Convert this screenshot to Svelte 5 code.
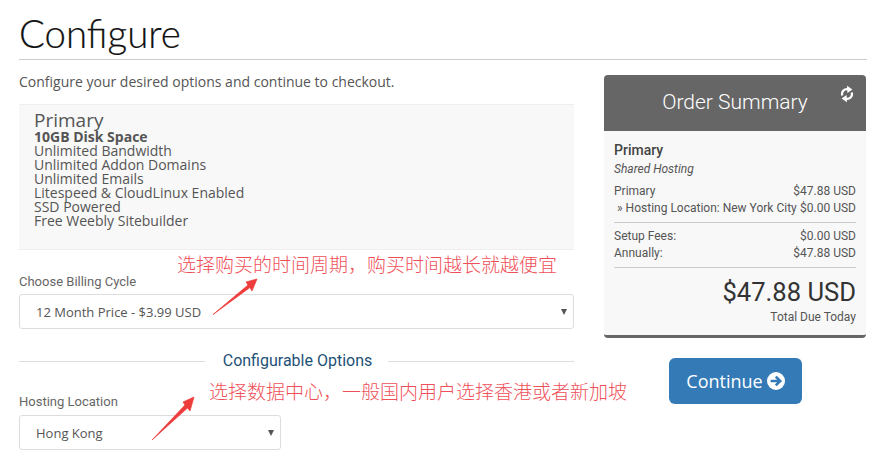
<script>
  const features = [
    "Unlimited Bandwidth",
    "Unlimited Addon Domains",
    "Unlimited Emails",
    "Litespeed & CloudLinux Enabled",
    "SSD Powered",
    "Free Weebly Sitebuilder"
  ]
</script>

<div class="page">
  <h1 class="title">Configure</h1>

  <div class="columns">
    <main class="main">
      <p class="intro">Configure your desired options and continue to checkout.</p>

      <div class="product">
        <div class="product-name">Primary</div>
        <div class="feature"><b>10GB Disk Space</b></div>
        {#each features as f}
          <div class="feature">{f}</div>
        {/each}
      </div>

      <div class="field billing">
        <span class="label">Choose Billing Cycle</span>
        <div class="select">12 Month Price - $3.99 USD<span class="caret"></span></div>
      </div>

      <div class="divider"><span>Configurable Options</span></div>

      <div class="field location">
        <span class="label">Hosting Location</span>
        <div class="select short">Hong Kong<span class="caret"></span></div>
      </div>
    </main>

    <aside class="side">
      <div class="summary">
        <div class="summary-head">
          Order Summary
          <svg class="refresh" viewBox="0 0 14 18" width="14" height="18" aria-hidden="true">
            <path d="M2.2 10.5 C1.2 6.4 4.4 3.4 8.2 4.2" fill="none" stroke="#fff" stroke-width="2.2"/>
            <path d="M7 0.8 L12.4 4.4 L7.4 8 Z" fill="#fff"/>
            <path d="M11.8 7.5 C12.8 11.6 9.6 14.6 5.8 13.8" fill="none" stroke="#fff" stroke-width="2.2"/>
            <path d="M7 17.2 L1.6 13.6 L6.6 10 Z" fill="#fff"/>
          </svg>
        </div>
        <div class="summary-body">
          <div class="s-name">Primary</div>
          <div class="s-group">Shared Hosting</div>
          <div class="s-row first"><span>Primary</span><span>$47.88 USD</span></div>
          <div class="s-row sub"><span>» Hosting Location: New York City</span><span>$0.00 USD</span></div>
          <div class="s-rule"></div>
          <div class="s-row"><span>Setup Fees:</span><span>$0.00 USD</span></div>
          <div class="s-row"><span>Annually:</span><span>$47.88 USD</span></div>
          <div class="s-rule"></div>
          <div class="s-total">$47.88 USD</div>
          <div class="s-due">Total Due Today</div>
        </div>
      </div>

      <button type="button" class="continue">
        Continue
        <svg viewBox="0 0 18 18" width="18" height="18" aria-hidden="true">
          <circle cx="9" cy="9" r="9" fill="#fff"/>
          <path d="M3.6 9 H13 M8.8 4.6 L13.2 9 L8.8 13.4" fill="none" stroke="#337ab7" stroke-width="2.6"/>
        </svg>
      </button>
    </aside>
  </div>

  <div class="note note-a">选择购买的时间周期，购买时间越长就越便宜</div>
  <div class="note note-b">选择数据中心，一般国内用户选择香港或者新加坡</div>

  <svg class="arrow arrow-a" viewBox="0 0 50 50" width="50" height="50" aria-hidden="true">
    <path d="M1 44.5 L36 15 L34 12 L45 9 L40 21 L38 17.5 Z" fill="#ee3b3b" stroke="#ee3b3b" stroke-width="0.7"/>
  </svg>
  <svg class="arrow arrow-b" viewBox="0 0 50 50" width="50" height="50" aria-hidden="true">
    <path d="M2 47 L35 12 L33 9 L44 4 L40 18 L37.5 15 Z" fill="#ee3b3b" stroke="#ee3b3b" stroke-width="0.7"/>
  </svg>
</div>

<style>
  :global(body) {
    margin: 0;
    background: #fff;
    overflow: hidden;
  }

  .page {
    position: relative;
    width: 887px;
    height: 468px;
    box-sizing: border-box;
    padding: 0 20px 0 19px;
    overflow: hidden;
    font-family: "Open Sans", sans-serif;
    color: #555;
  }

  .title {
    margin: 0;
    height: 59px;
    box-sizing: content-box;
    border-bottom: 1px solid #ccc;
    font-family: Lato, sans-serif;
    font-size: 38.4px;
    font-weight: 300;
    line-height: 67px;
    color: #111;
    -webkit-text-stroke: 0.2px #111;
  }

  .columns {
    display: flex;
    gap: 30px;
  }

  .main {
    width: 555px;
    flex-shrink: 0;
  }

  .intro {
    margin: 12px 0 0;
    font-size: 14px;
    line-height: 20px;
    color: #555;
  }

  .product {
    margin-top: 12px;
    height: 146px;
    box-sizing: border-box;
    padding: 5px 15px 0;
    background: #f8f8f8;
    border-top: 1px solid #eee;
    border-bottom: 1px solid #eee;
  }

  .product-name {
    font-size: 19px;
    line-height: 20px;
    color: #555;
  }

  .feature {
    font-size: 14px;
    line-height: 14px;
  }

  .feature b {
    font-weight: 700;
  }

  .field {
    display: flex;
    flex-direction: column;
    gap: 3px;
  }

  .billing {
    margin-top: 22px;
    gap: 2px;
  }

  .location {
    margin-top: 21px;
  }

  .label {
    font-family: Roboto, sans-serif;
    font-size: 13px;
    line-height: 20px;
    color: #666;
  }

  .select {
    position: relative;
    height: 35px;
    box-sizing: border-box;
    padding-left: 16px;
    border: 1px solid #ddd;
    border-radius: 3px;
    font-size: 13px;
    line-height: 35px;
    color: #555;
    background: #fff;
  }

  .select.short {
    width: 262px;
  }

  .caret {
    position: absolute;
    right: 6px;
    top: 14px;
    border-left: 3px solid transparent;
    border-right: 3px solid transparent;
    border-top: 6px solid #555;
  }

  .divider {
    display: flex;
    align-items: center;
    gap: 16px;
    margin-top: 22px;
    font-family: Roboto, sans-serif;
    font-size: 16px;
    line-height: 20px;
    color: #1e5176;
  }

  .divider::before,
  .divider::after {
    content: "";
    flex: 1;
    border-top: 1px solid #ddd;
  }

  .divider::before {
    margin-right: 2px;
  }

  .side {
    width: 262px;
    padding-top: 15px;
    display: flex;
    flex-direction: column;
    align-items: center;
  }

  .summary {
    width: 100%;
    font-family: Roboto, sans-serif;
    font-size: 12px;
    color: #555;
    background: #f8f8f8;
    border-radius: 4px;
    border-bottom: 3px solid #666;
  }

  .summary-head {
    position: relative;
    height: 56px;
    background: #666;
    color: #fff;
    border-radius: 4px 4px 0 0;
    font-size: 21px;
    font-weight: 300;
    line-height: 54px;
    text-align: center;
  }

  .refresh {
    position: absolute;
    right: 12px;
    top: 10px;
  }

  .summary-body {
    padding: 11px 10px 9px;
  }

  .s-name {
    font-size: 14px;
    font-weight: 500;
    line-height: 17px;
    color: #444;
  }

  .s-group {
    font-style: italic;
    line-height: 20px;
  }

  .s-row {
    display: flex;
    justify-content: space-between;
    line-height: 17px;
  }

  .s-row.first {
    margin-top: 4px;
  }

  .s-row.sub span:first-child {
    padding-left: 3px;
  }

  .s-rule {
    margin: 5px 0 5px;
    border-top: 1px solid #ccc;
  }

  .s-total {
    margin-top: 7px;
    text-align: right;
    font-size: 25.6px;
    line-height: 34px;
    color: #333;
  }

  .s-due {
    text-align: right;
    line-height: 17px;
  }

  .continue {
    display: flex;
    align-items: center;
    gap: 4px;
    margin: 20px 0 0 1px;
    height: 46px;
    padding: 0 17px;
    border: none;
    border-radius: 6px;
    background: #337ab7;
    color: #fff;
    font-family: "Open Sans", sans-serif;
    font-size: 18px;
  }

  .note {
    position: absolute;
    font-family: "Noto Sans CJK SC", sans-serif;
    font-size: 19px;
    line-height: 24px;
    font-weight: 300;
    color: #ef4f58;
    white-space: nowrap;
  }

  .note-a {
    left: 177px;
    top: 252px;
  }

  .note-b {
    left: 209px;
    top: 379px;
  }

  .arrow {
    position: absolute;
  }

  .arrow-a {
    left: 212px;
    top: 270px;
  }

  .arrow-b {
    left: 150px;
    top: 393px;
  }
</style>
